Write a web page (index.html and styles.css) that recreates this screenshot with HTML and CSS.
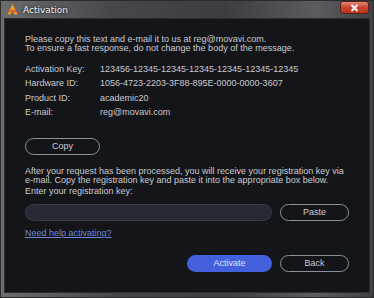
FILE: index.html
```html
<!DOCTYPE html>
<html lang="en">
<head>
<meta charset="UTF-8">
<title>Activation</title>
<link rel="stylesheet" href="styles.css">
</head>
<body>

<div class="window">

    <!-- TITLE BAR -->
    <div class="titlebar">
        <svg class="app-icon" width="13" height="13" viewBox="0 0 13 13">
            <path d="M6.5 1 L11.5 11.5 L8.5 11.5 L6.5 7 L4.5 11.5 L1.5 11.5 Z" fill="#f2a12b"/>
            <path d="M2 8.5 Q6.5 4.5 11 8.5 L11 10 Q6.5 7 2 10 Z" fill="#e8661c"/>
        </svg>
        <span class="title">Activation</span>
        <div class="close">
            <svg width="9" height="8" viewBox="0 0 9 8">
                <path d="M1.5 1 L7.5 7 M7.5 1 L1.5 7" stroke="#fff" stroke-width="1.8"/>
            </svg>
        </div>
    </div>

    <!-- CONTENT -->
    <div class="content">
        <div class="intro">
            Please copy this text and e-mail it to us at reg@movavi.com.<br>
            To ensure a fast response, do not change the body of the message.
        </div>

        <div class="info">
            <div>Activation Key:</div><div>123456-12345-12345-12345-12345-12345-12345</div>
            <div>Hardware ID:</div><div>1056-4723-2203-3F88-895E-0000-0000-3607</div>
            <div>Product ID:</div><div>academic20</div>
            <div>E-mail:</div><div>reg@movavi.com</div>
        </div>

        <button class="btn copy">Copy</button>

        <div class="after">
            After your request has been processed, you will receive your registration key via<br>
            e-mail. Copy the registration key and paste it into the appropriate box below.
        </div>
        <div class="enter">Enter your registration key:</div>

        <div class="key-row">
            <input class="key" type="text">
            <button class="btn">Paste</button>
        </div>

        <a class="help" href="#">Need help activating?</a>

        <div class="actions">
            <button class="btn primary">Activate</button>
            <button class="btn">Back</button>
        </div>
    </div>

</div>

</body>
</html>
```

FILE: styles.css
```css
body {
    margin: 0;
    background: #3a3b3d;
    font-family: "Liberation Sans", Arial, sans-serif;
}

/* WINDOW FRAME */
.window {
    width: 374px;
    height: 298px;
    box-sizing: border-box;
    padding: 0 3px 4px 3px;
    background: linear-gradient(90deg, #6b6c6e, #45474b 30%, #3b3d42 60%, #5a5c60 85%, #3e4044);
    border: 1px solid #2a2b2d;
    display: flex;
    flex-direction: column;
}

.titlebar {
    height: 17px;
    display: flex;
    align-items: center;
    position: relative;
}

.app-icon {
    margin-left: 2px;
    margin-right: 4px;
}

.title {
    font-family: "DejaVu Sans", sans-serif;
    font-size: 9px;
    color: #f0f0f0;
    text-shadow: 0 0 3px #000;
}

.close {
    position: absolute;
    right: 1px;
    top: 0;
    width: 29px;
    height: 13px;
    border-radius: 3px;
    border: 1px solid #5a2018;
    box-sizing: border-box;
    background: linear-gradient(#e48a78, #c8452f 50%, #b8341f);
    display: flex;
    align-items: center;
    justify-content: center;
}

/* CONTENT */
.content {
    flex: 1;
    background: #141519;
    border: 1px solid #2c2d31;
    padding: 16px 0 0 20px;
    color: #c9cbd2;
    font-size: 9px;
    line-height: 9px;
}

.intro {
    margin-bottom: 12px;
}

.info {
    display: grid;
    grid-template-columns: 75px auto;
    row-gap: 5.3px;
    margin-bottom: 21px;
}

.btn {
    width: 69px;
    height: 17px;
    border-radius: 9px;
    border: 1.5px solid #8d909c;
    background: #141519;
    color: #c9cbd2;
    font-family: inherit;
    font-size: 9px;
    padding: 0;
}

.copy {
    width: 75px;
    display: block;
    margin-bottom: 12px;
}

.enter {
    margin-top: 2px;
}

.key-row {
    display: flex;
    gap: 8px;
    margin-top: 8px;
}

.key {
    width: 247px;
    height: 17px;
    box-sizing: border-box;
    border-radius: 9px;
    border: 1px solid #363a49;
    background: #262936;
}

.help {
    display: inline-block;
    margin-top: 8px;
    color: #7086d6;
}

.actions {
    display: flex;
    gap: 8px;
    margin-top: 17px;
    margin-left: 162px;
}

.primary {
    width: 85px;
    border: none;
    background: #4460dd;
    color: #dfe4f7;
}
```
